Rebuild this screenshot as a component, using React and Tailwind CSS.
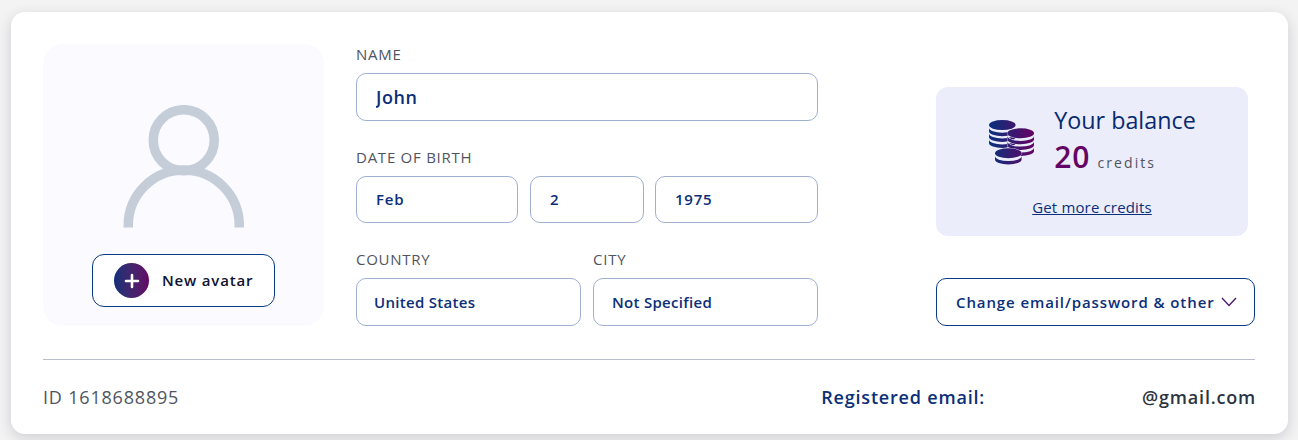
const FONT = "font-['Open_Sans',sans-serif]";

function Label({ children }) {
  return <label className="block h-[21px] text-[15px] leading-[21px] tracking-[0.05em] uppercase text-[#50545f]">{children}</label>;
}

function Field({ value, className = "" }) {
  return (
    <input
      readOnly
      value={value}
      className={`w-full rounded-[10px] border border-[#9fb0d3] bg-white font-semibold text-[#0b2f78] outline-none ${className}`}
    />
  );
}

const BG = "#ebedfa";

function Band({ cx, y, halo }) {
  const rx = 13.3;
  return (
    <path
      d={`M${cx - rx} ${y}v3.400a${rx} 5 0 0 0 ${rx * 2} 0v-3.400a${rx} 5 0 0 1 -${rx * 2} 0z`}
      fill="url(#coins)"
      stroke={halo ? BG : "none"}
      strokeWidth={halo ? 1 : 0}
      paintOrder="stroke"
    />
  );
}

function Coin({ cx, cy, halo }) {
  return (
    <ellipse
      cx={cx}
      cy={cy}
      rx="13.3"
      ry="5"
      fill="url(#coins)"
      stroke={halo ? BG : "none"}
      strokeWidth={halo ? 1 : 0}
      paintOrder="stroke"
    />
  );
}

function CoinsIcon() {
  return (
    <svg width="50" height="52" viewBox="0 0 50 52" className="shrink-0">
      <defs>
        <linearGradient id="coins" gradientUnits="userSpaceOnUse" x1="4" y1="0" x2="46" y2="0">
          <stop offset="0" stopColor="#0b2f7c" />
          <stop offset="1" stopColor="#640464" />
        </linearGradient>
      </defs>
      <Coin cx={15.3} cy={7.1} />
      <Band cx={15.3} y={9.800} />
      <Band cx={15.3} y={15.5} />
      <Band cx={15.3} y={21.500} />
      <Band cx={33.7} y={29.600} halo />
      <Band cx={33.7} y={23.600} halo />
      <Band cx={33.7} y={17.900} halo />
      <Coin cx={33.7} cy={15.3} halo />
      <Band cx={21.3} y={38.100} halo />
      <Coin cx={21.3} cy={35.3} halo />
    </svg>
  );
}

export default function App() {
  return (
    <div className={`h-[440px] bg-[#f3f3f3] pt-3 pl-[11px] pr-[10px] ${FONT}`}>
      <div className="h-[422px] rounded-[14px] bg-white pr-[33px] pl-8 pt-8 shadow-[0_4px_14px_rgba(40,40,70,0.18)]">
        <div className="flex h-[282px]">
          {/* avatar */}
          <div className="flex w-[281px] shrink-0 flex-col items-center rounded-[20px] bg-[#fafaff] pt-[61px]">
            <svg width="122" height="123" viewBox="0 0 122 123" fill="none" stroke="#c5cdd9" strokeWidth="9.5">
              <circle cx="60.750" cy="35.200" r="30.500" />
              <path d="M5.250 122.500v-2a55.500 55.500 0 0 1 111 0v2" />
            </svg>
            <button className="mt-[26px] flex h-[53px] w-[183px] items-center rounded-[12px] border border-[#0b3a85] bg-white pl-[21px]">
              <span className="flex h-[35px] w-[35px] items-center justify-center rounded-full bg-gradient-to-r from-[#0b2f78] to-[#640464]">
                <svg width="16" height="16" viewBox="0 0 16 16" stroke="#fff" strokeWidth="2.600" strokeLinecap="round">
                  <path d="M8 2v12M2 8h12" />
                </svg>
              </span>
              <span className="ml-[13px] text-[15px] font-semibold tracking-[0.055em] text-[#0d1330]">New avatar</span>
            </button>
          </div>

          {/* form */}
          <div className="ml-8 w-[462px] shrink-0">
            <Label>Name</Label>
            <Field value="John" className="mt-2 h-12 pl-[19px] text-lg tracking-[0.03em]" />
            <div className="mt-[26px]">
              <Label>Date of birth</Label>
              <div className="mt-2 flex gap-3">
                <Field value="Feb" className="h-[47px] !w-[162px] pb-px pl-[19px] text-[15px] tracking-[0.05em]" />
                <Field value="2" className="h-[47px] !w-[114px] pb-px pl-[19px] text-[15px] tracking-[0.05em]" />
                <Field value="1975" className="-ml-px h-[47px] !w-[163px] pb-px pl-[19px] text-[15px] tracking-[0.05em]" />
              </div>
            </div>
            <div className="mt-[26px] flex gap-3">
              <div className="w-[225px]">
                <Label>Country</Label>
                <Field value="United States" className="mt-2 h-12 pl-[17px] text-[15px] tracking-[0.02em]" />
              </div>
              <div className="w-[225px]">
                <Label>City</Label>
                <Field value="Not Specified" className="mt-2 h-12 pl-[18px] text-[15px] tracking-[0.02em]" />
              </div>
            </div>
          </div>

          {/* balance */}
          <div className="ml-auto flex w-[319px] flex-col pt-[43px]">
            <div className="flex h-[149px] w-[312px] flex-col items-center rounded-[12px] bg-[#ebedfa]">
              <div className="mt-[16px] -ml-px flex">
                <div className="pt-[15px]"><CoinsIcon /></div>
                <div className="ml-[17px]">
                  <div className="pt-px text-[23.300px] leading-[33px] font-medium text-[#072a70]">Your balance</div>
                  <div className="flex items-baseline">
                    <span className="text-[30px] leading-[40px] font-semibold tracking-[0.03em] text-[#640464]">20</span>
                    <span className="ml-[7px] text-sm tracking-[0.15em] text-[#50545f]">credits</span>
                  </div>
                </div>
              </div>
              <a href="#" className="mt-[19px] text-[15px] tracking-[0.01em] text-[#0b2f78] underline">Get more credits</a>
            </div>
            <button className="mt-[42px] flex h-12 w-full items-center rounded-[10px] border border-[#0b3a85] bg-white pl-[19px] text-[15px] font-semibold tracking-[0.06em] text-[#0b2f78]">
              Change email/password &amp; other
              <svg width="16" height="10" viewBox="0 0 16 10" fill="none" stroke="#4b1570" strokeWidth="1.300" className="ml-[6px]">
                <path d="M1 1l7 7.500L15 1" />
              </svg>
            </button>
          </div>
        </div>

        {/* footer */}
        <div className="mt-[33px] flex h-[75px] items-center border-t border-[#b8bfca] text-[18px] tracking-[0.045em]">
          <span className="text-[#50545f]">ID 1618688895</span>
          <span className="ml-auto font-semibold text-[#0b2f78]">Registered email:</span>
          <span className="-mr-px ml-[157px] font-semibold text-[#2d3340]">@gmail.com</span>
        </div>
      </div>
    </div>
  );
}
